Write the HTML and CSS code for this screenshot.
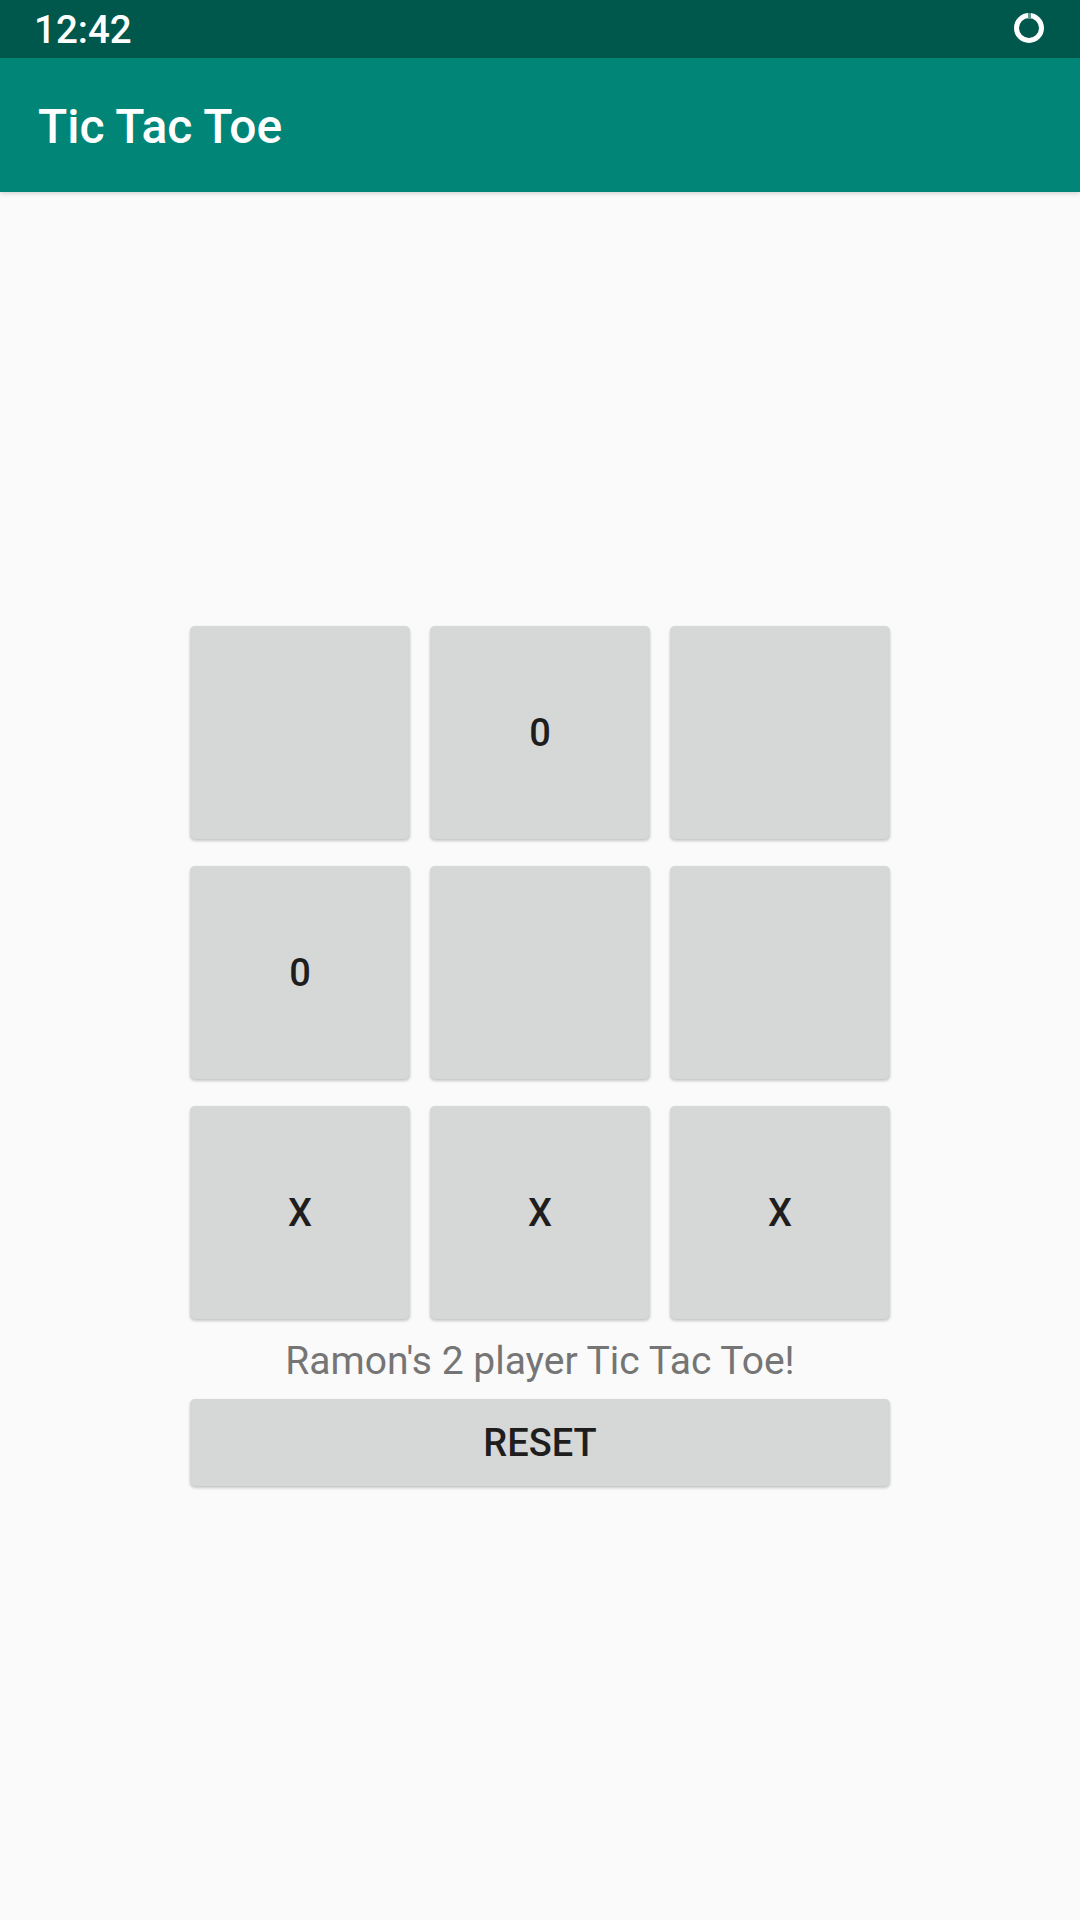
FILE: index.html
```html
<!DOCTYPE html>
<html>
<head>
<meta charset="utf-8">
<link rel="stylesheet" href="styles.css">
</head>
<body>
<div class="screen">
  <div class="status-bar">
    <span class="clock">12:42</span>
    <svg class="ring" width="32" height="32" viewBox="0 0 32 32">
      <circle cx="16" cy="16" r="12.5" fill="none" stroke="#ffffff" stroke-width="5"/>
      <rect x="15" y="1" width="3" height="6" fill="#5f9c92"/>
    </svg>
  </div>
  <header class="app-bar">
    <h1 class="title">Tic Tac Toe</h1>
  </header>
  <main class="content">
    <div class="board">
      <button class="cell"></button>
      <button class="cell">0</button>
      <button class="cell"></button>
      <button class="cell">0</button>
      <button class="cell"></button>
      <button class="cell"></button>
      <button class="cell">X</button>
      <button class="cell">X</button>
      <button class="cell">X</button>
    </div>
    <p class="caption">Ramon's 2 player Tic Tac Toe!</p>
    <button class="reset">RESET</button>
  </main>
</div>
</body>
</html>
```

FILE: styles.css
```css
html, body {
  margin: 0;
  padding: 0;
  background: #fafafa;
}

.screen {
  width: 1080px;
  height: 1920px;
  font-family: Roboto, "Liberation Sans", sans-serif;
  background: #fafafa;
  display: flex;
  flex-direction: column;
  overflow: hidden;
}

.status-bar {
  height: 58px;
  background: #00574b;
  display: flex;
  align-items: center;
  justify-content: space-between;
  padding: 0 34px 0 34px;
  box-sizing: border-box;
}

.clock {
  color: #ffffff;
  font-size: 38.5px;
  font-weight: 500;
  line-height: 58px;
  padding-top: 2px;
}

.ring {
  display: block;
  margin-right: 1px;
  margin-top: -2px;
}

.app-bar {
  height: 134px;
  background: #008577;
  display: flex;
  align-items: center;
  padding-left: 38px;
  box-shadow: 0 2px 4px rgba(0, 0, 0, 0.14);
  position: relative;
  z-index: 1;
}

.title {
  margin: 0;
  padding-top: 3px;
  color: #ffffff;
  font-size: 48px;
  font-weight: 500;
  line-height: 56px;
}

.content {
  display: flex;
  flex-direction: column;
  align-items: center;
  padding-top: 434px;
}

.board {
  display: grid;
  grid-template-columns: repeat(3, 220px);
  grid-auto-rows: 213px;
  column-gap: 20px;
  row-gap: 27px;
}

.cell,
.reset {
  border: none;
  margin: 0;
  padding: 0;
  background: #d6d7d7;
  border-radius: 5px;
  box-shadow: 0 2px 3px rgba(0, 0, 0, 0.2), 0 0 2px rgba(0, 0, 0, 0.06);
  font-family: Roboto, "Liberation Sans", sans-serif;
  font-size: 38px;
  font-weight: 500;
  color: #1e1e1e;
  display: flex;
  align-items: center;
  justify-content: center;
}

.cell {
  width: 220px;
  height: 213px;
}

.caption {
  margin: 19px 0 0 0;
  color: #757575;
  font-size: 39px;
  line-height: 46px;
}

.reset {
  margin-top: 15px;
  width: 700px;
  height: 87px;
}
```
